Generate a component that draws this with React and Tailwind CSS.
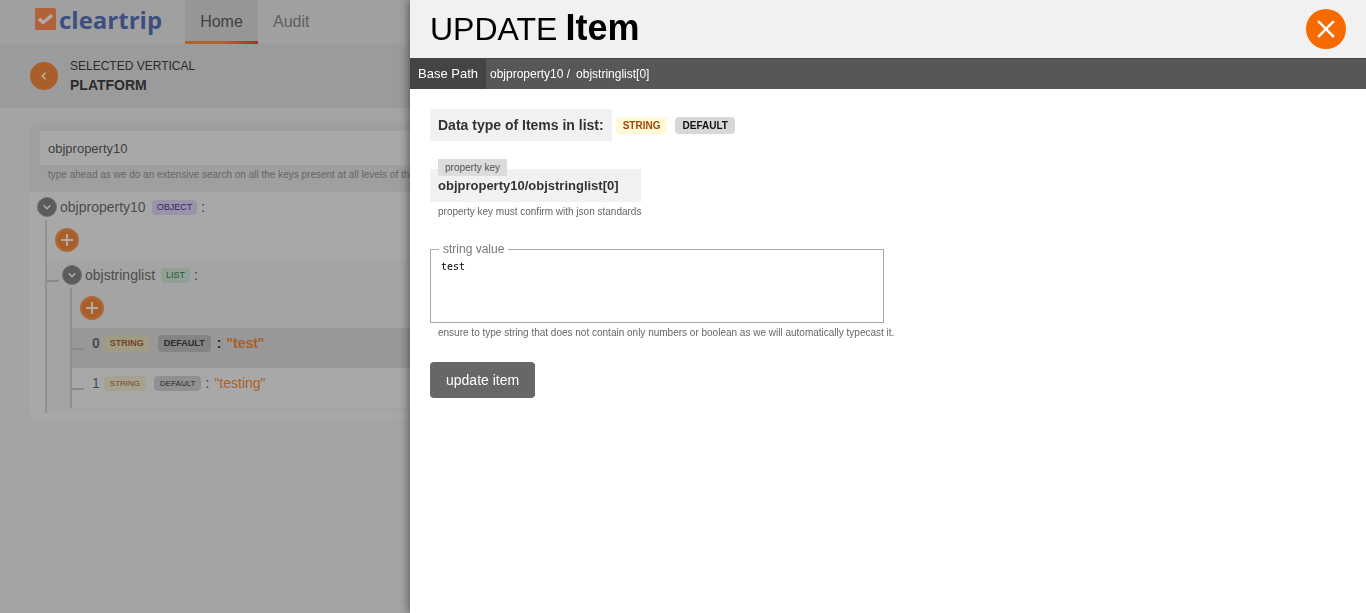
import React from "react";

function Chevron({ className, d }) {
  return (
    <svg viewBox="0 0 10 10" className={className} fill="none" stroke="currentColor" strokeWidth="1.5">
      <path d={d} />
    </svg>
  );
}

function Toggle() {
  return (
    <button aria-label="Collapse" className="flex size-5 shrink-0 items-center justify-center rounded-full border border-[#717171] bg-[#5b5b5b] text-[#aaa]">
      <Chevron className="size-[10px]" d="M1.7 3.4 L5 6.7 L8.3 3.4" />
    </button>
  );
}

function AddButton() {
  return (
    <button aria-label="Add" className="flex size-6 items-center justify-center rounded-full border-2 border-[#b0683b] bg-[#a95f2a] text-[#b4aaa4]">
      <svg viewBox="0 0 12 12" className="size-3 shrink-0" stroke="currentColor" strokeWidth="2">
        <path d="M6 0V12M0 6H12" />
      </svg>
    </button>
  );
}

function Tag({ className, children }) {
  return <span className={"rounded-sm " + className}>{children}</span>;
}

function Dash() {
  return <span className="mt-3 h-[2px] w-3 shrink-0 bg-[#8a8a8a]" />;
}

function Page() {
  return (
    <div className="min-h-screen bg-[#a4a4a4]">
      <header className="flex h-11 items-stretch bg-[#a0a0a0] pl-[35px]">
        <a href="#home" aria-label="cleartrip" className="flex w-[150px] items-start gap-[3px] text-[#3d4f82]">
          <svg viewBox="0 0 21 22" className="mt-2 h-[22px] w-[21px] shrink-0">
            <rect width="21" height="22" rx="1.5" fill="#b0623a" />
            <path d="M2.6 12.2 L5.4 9.6 L8.2 12.4 L16.2 5.7 L17.8 8.8 L8.2 16.6 Z" fill="#b3aaa6" />
          </svg>
          <span className="font-['Open_Sans',sans-serif] text-[24px] leading-[40px] font-bold">cleartrip</span>
        </a>
        <nav className="flex text-base">
          <a href="#home" className="flex w-[73px] flex-col bg-[#969696] text-center leading-[41px] text-[#404040]">
            <span className="h-[41px] pt-px">Home</span>
            <span className="h-[3px] bg-linear-to-r from-[#b0642c] from-50% to-[#aa2b2b]" />
          </a>
          <a href="#audit" className="px-[15px] pt-px leading-[41px] text-[#5f5f5f]">Audit</a>
        </nav>
      </header>
      <section className="flex h-16 items-center gap-3 bg-[#9b9b9b] pl-[30px]">
        <button aria-label="Back" className="flex size-7 items-center justify-center rounded-full bg-[#a95f2a] text-[#bdb0a8]">
          <Chevron className="size-[10px]" d="M6.6 1.7 L3.3 5 L6.6 8.3" />
        </button>
        <div className="pb-[2px] text-[#2b2b2b]">
          <p className="text-xs leading-5">SELECTED VERTICAL</p>
          <p className="text-sm leading-[19px] font-bold">PLATFORM</p>
        </div>
      </section>
      <main className="ml-[30px] pt-[15px]">
        <div className="overflow-hidden rounded-md bg-[#a8a8a8] pb-[6px]">
          <div className="h-[69px] bg-[#9f9f9f] px-[10px] pt-2">
            <input aria-label="Search keys" defaultValue="objproperty10" className="block h-[34px] w-full bg-[#a8a8a8] px-2 text-[13px] text-[#404040] outline-none" />
            <p className="px-2 pt-[3px] text-[10px] leading-[14px] text-[#666]">
              type ahead as we do an extensive search on all the keys present at all levels of the data
            </p>
          </div>
          <div className="flex h-7 items-center pt-[2px] pl-[7px] text-sm">
            <Toggle />
            <span className="pl-[3px] text-[#4c4c4c]">objproperty10</span>
            <Tag className="mr-1 ml-[6px] bg-[#9b93a8] px-[5px] text-[9px] leading-[15px] font-medium text-[#38216e]">OBJECT</Tag>
            <span className="text-[#552c2c]">:</span>
          </div>
          <div className="ml-[15px] border-l-2 border-[#919191]">
            <div className="h-10 pt-2 pl-2">
              <AddButton />
            </div>
            <div className="bg-[#a4a4a4] pb-[5px]">
              <div className="flex h-7 items-center pt-[2px] text-sm">
                <Dash />
                <span className="w-[3px]" />
                <Toggle />
                <span className="pl-[3px] text-[#4c4c4c]">objstringlist</span>
                <Tag className="mr-1 ml-[6px] bg-[#91a094] px-[5px] text-[9px] leading-[15px] font-medium text-[#1f5a35]">LIST</Tag>
                <span className="text-[#552c2c]">:</span>
              </div>
              <div className="ml-[23px] border-l-2 border-[#8f8f8f]">
                <div className="h-10 pt-2 pl-2">
                  <AddButton />
                </div>
                <div className="flex h-10 items-center bg-[#989898] pb-[10px] text-sm font-bold">
                  <Dash />
                  <span className="pl-2 text-[#4c4c4c]">0</span>
                  <Tag className="ml-1 bg-[#9f9c86] px-[6px] text-[9px] leading-[17px] text-[#7a4326]">STRING</Tag>
                  <Tag className="mr-[6px] ml-2 bg-[#848484] px-[6px] text-[9px] leading-[17px] text-[#2b2b2b]">DEFAULT</Tag>
                  <span className="text-[#2b2b2b]">:</span>
                  <span className="pl-[5px] text-[#a95f2a]">"test"</span>
                </div>
                <div className="flex h-10 items-center bg-[#a8a8a8] pb-[10px] text-sm">
                  <Dash />
                  <span className="pl-2 text-[#4c4c4c]">1</span>
                  <Tag className="ml-1 bg-[#a5a28f] px-[6px] text-[8px] leading-[15px] text-[#7a4326]">STRING</Tag>
                  <Tag className="mr-1 ml-2 bg-[#909090] px-[6px] text-[8px] leading-[15px] text-[#2b2b2b]">DEFAULT</Tag>
                  <span className="text-[#552c2c]">:</span>
                  <span className="pl-[5px] text-[#a95f2a]">"testing"</span>
                </div>
              </div>
            </div>
          </div>
        </div>
      </main>
    </div>
  );
}

function Drawer() {
  return (
    <aside role="dialog" aria-label="Update item" className="fixed inset-y-0 right-0 left-[410px] bg-white shadow-[0_0_10px_rgba(0,0,0,0.6)]">
      <header className="flex h-[58px] items-center justify-between bg-[#f1f1f1] pr-5 pl-5 text-black">
        <h1 className="flex items-baseline gap-2 pb-[2px] text-[32px] leading-[56px]">
          UPDATE <b className="text-4xl leading-[56px]">Item</b>
        </h1>
        <button aria-label="Close" className="flex size-10 items-center justify-center rounded-full bg-[#f66a00] text-white">
          <svg viewBox="0 0 18 18" className="size-[18px]" stroke="currentColor" strokeWidth="2.6">
            <path d="M1.2 1.2L16.8 16.8M16.8 1.2L1.2 16.8" />
          </svg>
        </button>
      </header>
      <div className="flex h-[31px] items-stretch border-t border-[#444] bg-[#575757] text-white">
        <span className="bg-[#444] px-2 text-[13px] leading-[30px]">Base Path</span>
        <span className="pl-1 text-xs leading-[30px]">objproperty10 /</span>
        <span className="pl-[6px] text-xs leading-[30px]">objstringlist[0]</span>
      </div>
      <form className="p-5" onSubmit={(e) => e.preventDefault()}>
        <div className="flex items-center">
          <span className="bg-[#f1f1f1] px-2 text-sm leading-8 font-bold text-[#333]">Data type of Items in list:</span>
          <Tag className="ml-1 bg-[#fff9d6] px-[7px] text-[10px] leading-[17px] font-bold text-[#a3450f]">STRING</Tag>
          <Tag className="ml-2 bg-[#d8d8d8] px-[7px] text-[10px] leading-[17px] font-bold text-[#111]">DEFAULT</Tag>
        </div>
        <div className="relative mt-7 w-[211px]">
          <label htmlFor="key" className="absolute -top-[10px] left-2 bg-[#dcdcdc] px-[7px] text-[10px] leading-[17px] text-[#555]">property key</label>
          <input id="key" readOnly defaultValue="objproperty10/objstringlist[0]" className="block h-[33px] w-full bg-[#f1f1f1] px-2 text-[13px] font-bold text-[#333] outline-none" />
        </div>
        <p className="px-2 pt-[3px] text-[10px] leading-[14px] text-[#666]">property key must confirm with json standards</p>
        <fieldset className="mt-[22px] h-[82px] w-[454px] border border-[#a9a9a9] pl-[8px]">
          <legend className="px-1 text-xs leading-[16px] text-[#777]">
            <label htmlFor="value">string value</label>
          </legend>
          <textarea id="value" defaultValue="test" className="block h-[56px] w-full resize-none px-[2px] pt-[3px] font-['DejaVu_Sans_Mono',monospace] text-[10px] leading-[14px] text-black outline-none" />
        </fieldset>
        <p className="px-2 pt-[3px] text-[10px] leading-[14px] text-[#666]">
          ensure to type string that does not contain only numbers or boolean as we will automatically typecast it.
        </p>
        <button type="submit" className="mt-[22px] h-9 rounded-sm bg-[#676767] px-4 text-sm text-white">update item</button>
      </form>
    </aside>
  );
}

export default function App() {
  return (
    <div className="font-['Liberation_Sans',Arial,sans-serif]">
      <Page />
      <Drawer />
    </div>
  );
}
